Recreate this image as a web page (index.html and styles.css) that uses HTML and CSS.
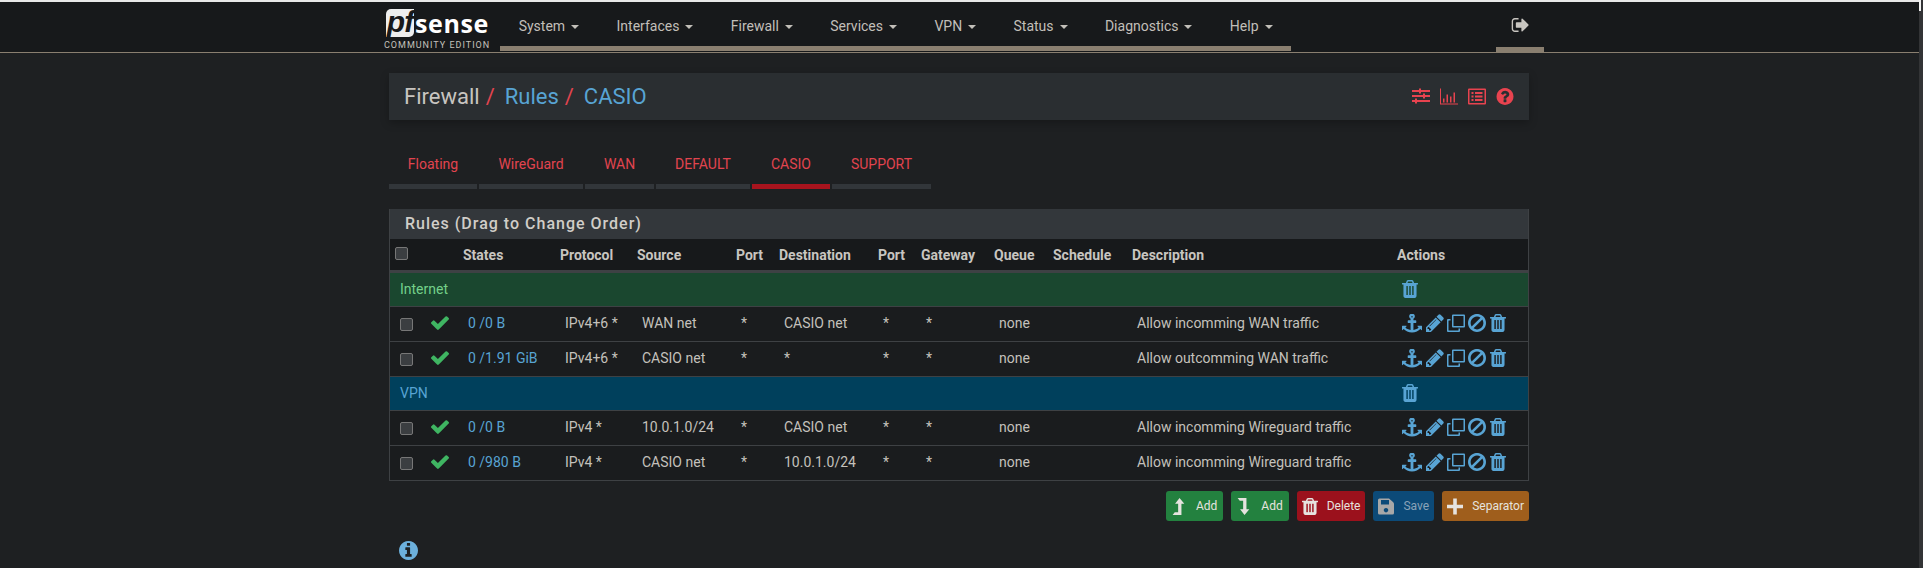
FILE: index.html
```html
<!DOCTYPE html>
<html lang="en">
<head>
<meta charset="utf-8">
<title>Firewall: Rules: CASIO</title>
<link rel="stylesheet" href="styles.css">
</head>
<body>
<svg class="defs">
  <symbol id="i-check" viewBox="121 330 1550 1190"><path d="M1671 566q0 40-28 68l-724 724-136 136q-28 28-68 28t-68-28l-136-136-362-362q-28-28-28-68t28-68l136-136q28-28 68-28t68 28l294 295 656-657q28-28 68-28t68 28l136 136q28 28 28 68z"/></symbol>
  <symbol id="i-trash" viewBox="192 128 1408 1536" preserveAspectRatio="none"><path d="M704 1376v-704q0-14-9-23t-23-9h-64q-14 0-23 9t-9 23v704q0 14 9 23t23 9h64q14 0 23-9t9-23zm256 0v-704q0-14-9-23t-23-9h-64q-14 0-23 9t-9 23v704q0 14 9 23t23 9h64q14 0 23-9t9-23zm256 0v-704q0-14-9-23t-23-9h-64q-14 0-23 9t-9 23v704q0 14 9 23t23 9h64q14 0 23-9t9-23zm-544-992h448l-48-117q-7-9-17-11h-317q-10 2-17 11zm928 32v64q0 14-9 23t-23 9h-96v948q0 83-47 143.5t-113 60.5h-832q-66 0-113-58.5t-47-141.5v-952h-96q-14 0-23-9t-9-23v-64q0-14 9-23t23-9h309l70-167q15-37 54-63t79-26h320q40 0 79 26t54 63l70 167h309q14 0 23 9t9 23z"/></symbol>
  <symbol id="i-anchor" viewBox="0 0 1792 1792" preserveAspectRatio="none"><path d="M960 256q0-26-19-45t-45-19-45 19-19 45 19 45 45 19 45-19 19-45zm832 888v352q0 22-20 30-8 2-12 2-12 0-23-9l-93-93q-119 143-318.5 226.5t-429.5 83.5-429.5-83.5-318.5-226.5l-93 93q-9 9-23 9-4 0-12-2-20-8-20-30v-352q0-14 9-23t23-9h352q22 0 30 20 8 19-7 35l-100 100q67 91 189.5 153.5t271.5 82.5v-647h-192q-26 0-45-19t-19-45v-128q0-26 19-45t45-19h192v-163q-58-34-93-92.5t-35-128.5q0-106 75-181t181-75 181 75 75 181q0 70-35 128.5t-93 92.5v163h192q26 0 45 19t19 45v128q0 26-19 45t-45 19h-192v647q149-20 271.5-82.5t189.5-153.5l-100-100q-15-16-7-35 8-20 30-20h352q14 0 23 9t9 23z"/></symbol>
  <symbol id="i-pencil" viewBox="128 128 1536 1536"><path d="M491 1536l91-91-235-235-91 91v107h128v128h107zm523-928q0-22-22-22-10 0-17 7l-542 542q-7 7-7 17 0 22 22 22 10 0 17-7l542-542q7-7 7-17zm-54-192l416 416-832 832h-416v-416zm683 96q0 53-37 90l-166 166-416-416 166-165q36-38 90-38 53 0 91 38l235 234q37 39 37 91z"/></symbol>
  <symbol id="i-clone" viewBox="0 0 18 18"><path fill-rule="evenodd" d="M5 1.500q0-1 1-1h11q1 0 1 1v11q0 1-1 1H6q-1 0-1-1zm1.500.5v10h10V2zM3.500 5v1.500H2q-.5 0-.5.5v9q0 .5.5.5h9q.5 0 .5-.5v-1.500H13V17q0 1-1 1H1q-1 0-1-1V6q0-1 1-1z"/></symbol>
  <symbol id="i-ban" viewBox="0 128 1536 1536"><path d="M1312 893q0-161-87-295l-754 753q137 89 297 89 111 0 211.5-43.5t173.5-116.5 116-174.5 43-212.5zm-999 299l755-754q-135-91-300-91-148 0-273 73t-198 199-73 274q0 162 89 299zm1223-299q0 157-61 300t-163.5 246-245 164-298.5 61-298.5-61-245-164-163.5-246-61-300 61-299.5 163.5-245.5 245-164 298.5-61 298.5 61 245 164 163.5 245.5 61 299.5z"/></symbol>
  <symbol id="i-signout" viewBox="0 256 1664 1280"><path d="M704 1440q0 4 1 20t.5 26.5-3 23.5-10 19.5-20.5 6.500h-320q-119 0-203.500-84.500t-84.500-203.500v-704q0-119 84.500-203.500t203.500-84.500h320q13 0 22.500 9.500t9.500 22.500q0 4 1 20t.5 26.500-3 23.500-10 19.500-20.500 6.500h-320q-66 0-113 47t-47 113v704q0 66 47 113t113 47h312l11.500 1 11.500 3 8 5.500 7 9 2 13.500zm928-544q0 26-19 45l-544 544q-19 19-45 19t-45-19-19-45v-288h-448q-26 0-45-19t-19-45v-384q0-26 19-45t45-19h448v-288q0-26 19-45t45-19 45 19l544 544q19 19 19 45z"/></symbol>
  <symbol id="i-question" viewBox="0 128 1536 1536"><path d="M896 1376v-192q0-14-9-23t-23-9h-192q-14 0-23 9t-9 23v192q0 14 9 23t23 9h192q14 0 23-9t9-23zm256-672q0-88-55.500-163t-138.500-116-170-41q-243 0-371 213-15 24 8 42l132 100q7 6 19 6 16 0 25-12 53-68 86-92 34-24 86-24 48 0 85.500 26t37.500 59q0 38-20 61t-68 45q-63 28-115.500 86.500t-52.500 125.500v36q0 14 9 23t23 9h192q14 0 23-9t9-23q0-19 21.500-49.500t54.500-49.500q32-18 49-28.500t46-35 44.500-48 28-60.500 12.500-81zm384 192q0 209-103 385.500t-279.500 279.500-385.500 103-385.500-103-279.500-279.500-103-385.500 103-385.500 279.500-279.500 385.500-103 385.500 103 279.500 279.500 103 385.500z"/></symbol>
  <symbol id="i-info" viewBox="0 128 1536 1536"><path d="M1024 1376v-160q0-14-9-23t-23-9h-96v-512q0-14-9-23t-23-9h-320q-14 0-23 9t-9 23v160q0 14 9 23t23 9h96v320h-96q-14 0-23 9t-9 23v160q0 14 9 23t23 9h448q14 0 23-9t9-23zm-128-896v-160q0-14-9-23t-23-9h-192q-14 0-23 9t-9 23v160q0 14 9 23t23 9h192q14 0 23-9t9-23zm640 416q0 209-103 385.500t-279.500 279.500-385.500 103-385.500-103-279.500-279.500-103-385.500 103-385.500 279.500-279.500 385.500-103 385.500 103 279.500 279.500 103 385.500z"/></symbol>
  <symbol id="i-sliders" viewBox="0 0 18 16"><path d="M0 1.500h7V0h2v1.500h9v2H9V5H7V3.500H0zM0 6.500h11V5h2v1.500h5v2h-5V10h-2V8.500H0zM0 11.500h3V10h2v1.500h13v2H5V15H3v-1.500H0z"/></symbol>
  <symbol id="i-chart" viewBox="0 0 18 16"><path d="M0 0h1v15h17v1H0zM3 10h1.500v4H3zM6.500 6H8v8H6.500zM10 8h1.500v6H10zM13.500 4H15v10h-1.500z"/></symbol>
  <symbol id="i-list" viewBox="0 0 18 16"><path fill-rule="evenodd" d="M1 0h16q1 0 1 1v14q0 1-1 1H1q-1 0-1-1V1q0-1 1-1zm.5 1.500v13h15v-13zM3.500 3.500h2v2h-2zM7 3.500h7.500v2H7zM3.500 7h2v2h-2zM7 7h7.500v2H7zM3.500 10.500h2v2h-2zM7 10.500h7.500v2H7z"/></symbol>
  <symbol id="i-levelup" viewBox="0 0 12 16"><path d="M6.500 0l4.500 5.500H8.300V16H0l2-2.500h3.200V5.500H2.300z"/></symbol>
  <symbol id="i-leveldown" viewBox="0 0 12 16"><path d="M6.500 16L11 10.500H8.300V0H0l2 2.500h3.200v8H2.300z"/></symbol>
  <symbol id="i-save" viewBox="0 0 16 16"><path fill-rule="evenodd" d="M1.500 0H11l4 3.500q1 1 1 2V14.500q0 1.500-1.500 1.500h-13Q0 16 0 14.500v-13Q0 0 1.500 0zM3 1.500V6h8V1.500zM8 9.500a2.200 2.200 0 1 0 .01 0z"/></symbol>
  <symbol id="i-plus" viewBox="0 0 16 16"><path d="M6.200 0h3.600v6.200H16v3.600H9.800V16H6.200V9.800H0V6.200h6.200z"/></symbol>
</svg>

<header class="topbar">
  <div class="topbar-inner">
    <a class="brand">
      <span class="brand-mark"><span class="brand-pf">pf</span><span class="brand-sense">sense</span></span>
      <span class="brand-sub">COMMUNITY EDITION</span>
    </a>
    <ul class="menu">
      <li>System<i class="caret"></i></li>
      <li>Interfaces<i class="caret"></i></li>
      <li>Firewall<i class="caret"></i></li>
      <li>Services<i class="caret"></i></li>
      <li>VPN<i class="caret"></i></li>
      <li>Status<i class="caret"></i></li>
      <li>Diagnostics<i class="caret"></i></li>
      <li>Help<i class="caret"></i></li>
    </ul>
    <div class="logout"><svg class="ic-logout"><use href="#i-signout"/></svg></div>
  </div>
</header>

<main class="page">
  <div class="crumbs">
    <h1 class="crumb-title">
      <span class="crumb">Firewall</span><span class="sep">/</span>
      <a class="crumb-link">Rules</a><span class="sep">/</span>
      <a class="crumb-link">CASIO</a>
    </h1>
    <div class="crumb-icons">
      <svg class="ic-head"><use href="#i-sliders"/></svg>
      <svg class="ic-head"><use href="#i-chart"/></svg>
      <svg class="ic-head"><use href="#i-list"/></svg>
      <svg class="ic-head"><use href="#i-question"/></svg>
    </div>
  </div>

  <ul class="tabs">
    <li class="tab t1">Floating</li>
    <li class="tab t2">WireGuard</li>
    <li class="tab t3">WAN</li>
    <li class="tab t4">DEFAULT</li>
    <li class="tab t5 active">CASIO</li>
    <li class="tab t6">SUPPORT</li>
  </ul>

  <section class="panel">
    <h2 class="panel-title">Rules (Drag to Change Order)</h2>
    <table class="rules">
      <colgroup>
        <col class="c1"><col class="c2"><col class="c3"><col class="c4"><col class="c5"><col class="c6"><col class="c7"><col class="c8"><col class="c9"><col class="c10"><col class="c11"><col class="c12"><col class="c13">
      </colgroup>
      <thead>
        <tr>
          <th><input type="checkbox" class="cb"></th><th></th><th>States</th><th>Protocol</th><th>Source</th><th>Port</th><th>Destination</th><th>Port</th><th>Gateway</th><th>Queue</th><th>Schedule</th><th>Description</th><th>Actions</th>
        </tr>
      </thead>
      <tbody>
        <tr class="group green">
          <td colspan="12">Internet</td>
          <td class="acts"><svg class="ic-trash"><use href="#i-trash"/></svg></td>
        </tr>
        <tr>
          <td><input type="checkbox" class="cb"></td>
          <td class="ok"><svg class="ic-check"><use href="#i-check"/></svg></td>
          <td class="link">0 /0 B</td><td>IPv4+6 *</td><td>WAN net</td><td>*</td><td>CASIO net</td><td>*</td><td>*</td><td>none</td><td></td><td>Allow incomming WAN traffic</td>
          <td class="acts"><svg class="ic-anchor"><use href="#i-anchor"/></svg><svg class="ic-pencil"><use href="#i-pencil"/></svg><svg class="ic-clone"><use href="#i-clone"/></svg><svg class="ic-ban"><use href="#i-ban"/></svg><svg class="ic-trash"><use href="#i-trash"/></svg></td>
        </tr>
        <tr>
          <td><input type="checkbox" class="cb"></td>
          <td class="ok"><svg class="ic-check"><use href="#i-check"/></svg></td>
          <td class="link">0 /1.91 GiB</td><td>IPv4+6 *</td><td>CASIO net</td><td>*</td><td>*</td><td>*</td><td>*</td><td>none</td><td></td><td>Allow outcomming WAN traffic</td>
          <td class="acts"><svg class="ic-anchor"><use href="#i-anchor"/></svg><svg class="ic-pencil"><use href="#i-pencil"/></svg><svg class="ic-clone"><use href="#i-clone"/></svg><svg class="ic-ban"><use href="#i-ban"/></svg><svg class="ic-trash"><use href="#i-trash"/></svg></td>
        </tr>
        <tr class="group blue">
          <td colspan="12">VPN</td>
          <td class="acts"><svg class="ic-trash"><use href="#i-trash"/></svg></td>
        </tr>
        <tr>
          <td><input type="checkbox" class="cb"></td>
          <td class="ok"><svg class="ic-check"><use href="#i-check"/></svg></td>
          <td class="link">0 /0 B</td><td>IPv4 *</td><td>10.0.1.0/24</td><td>*</td><td>CASIO net</td><td>*</td><td>*</td><td>none</td><td></td><td>Allow incomming Wireguard traffic</td>
          <td class="acts"><svg class="ic-anchor"><use href="#i-anchor"/></svg><svg class="ic-pencil"><use href="#i-pencil"/></svg><svg class="ic-clone"><use href="#i-clone"/></svg><svg class="ic-ban"><use href="#i-ban"/></svg><svg class="ic-trash"><use href="#i-trash"/></svg></td>
        </tr>
        <tr>
          <td><input type="checkbox" class="cb"></td>
          <td class="ok"><svg class="ic-check"><use href="#i-check"/></svg></td>
          <td class="link">0 /980 B</td><td>IPv4 *</td><td>CASIO net</td><td>*</td><td>10.0.1.0/24</td><td>*</td><td>*</td><td>none</td><td></td><td>Allow incomming Wireguard traffic</td>
          <td class="acts"><svg class="ic-anchor"><use href="#i-anchor"/></svg><svg class="ic-pencil"><use href="#i-pencil"/></svg><svg class="ic-clone"><use href="#i-clone"/></svg><svg class="ic-ban"><use href="#i-ban"/></svg><svg class="ic-trash"><use href="#i-trash"/></svg></td>
        </tr>
      </tbody>
    </table>
  </section>

  <div class="buttons">
    <a class="btn b-green"><svg class="ic-btn"><use href="#i-levelup"/></svg>Add</a>
    <a class="btn b-green"><svg class="ic-btn"><use href="#i-leveldown"/></svg>Add</a>
    <a class="btn b-red"><svg class="ic-btn"><use href="#i-trash"/></svg>Delete</a>
    <a class="btn b-blue"><svg class="ic-btn ic-save"><use href="#i-save"/></svg>Save</a>
    <a class="btn b-orange"><svg class="ic-btn"><use href="#i-plus"/></svg>Separator</a>
  </div>

  <div class="info"><svg class="ic-info"><use href="#i-info"/></svg></div>
</main>
<div class="scrollbar"><div class="scroll-thumb"></div></div>
</body>
</html>
```

FILE: styles.css
```css
* { box-sizing: border-box; }
html, body { margin: 0; padding: 0; }
body {
  background: #1e2022;
  color: #c8c5c0;
  font-family: Roboto, "Liberation Sans", sans-serif;
  font-size: 14px;
  height: 568px;
  overflow: hidden;
}
svg { fill: currentColor; display: block; }
.defs { display: none; }
ul { list-style: none; margin: 0; padding: 0; }

.scrollbar { position: absolute; top: 0; right: 0; width: 4px; height: 568px; background: #333436; }
.scroll-thumb { width: 2px; height: 11px; background: #f2f2f2; }

.topbar {
  background: #17191b;
  border-top: 2px solid #e8e8e8;
  border-bottom: 1px solid #8a7f70;
  height: 53px;
  padding-right: 5px;
  display: flex;
  justify-content: center;
}
.topbar-inner { width: 1140px; display: flex; }
.brand { width: 111px; display: flex; flex-direction: column; color: #fff; }
.brand-mark { display: flex; align-items: center; height: 28px; margin-top: 7px; margin-left: -3px; }
.brand-pf {
  background: #eeeeee;
  color: #17191b;
  width: 28px;
  height: 28px;
  border-radius: 5px 0 5px 0;
  font: italic bold 30px/25px "Liberation Sans", sans-serif;
  letter-spacing: -1px;
  text-align: center;
}
.brand-sense { font: bold 25px/28px "Open Sans", sans-serif; letter-spacing: 0.6px; margin-left: 1px; }
.brand-sub { font-size: 9px; line-height: 11px; letter-spacing: 1px; color: #c4c1bc; margin-top: 3px; margin-left: -5px; white-space: nowrap; }

.menu {
  display: flex;
  height: 49px;
  border-bottom: 5px solid #8a7f70;
  color: #c2bfb9;
}
.menu li { padding: 0 18.700px; line-height: 48px; white-space: nowrap; }
.caret {
  display: inline-block;
  width: 0; height: 0;
  margin-left: 6px;
  vertical-align: 2px;
  border-top: 4px solid;
  border-left: 4px solid transparent;
  border-right: 4px solid transparent;
}
.logout {
  margin-left: auto;
  margin-right: -15px;
  width: 48px;
  height: 50px;
  border-bottom: 5px solid #8a7f70;
  color: #c9c6c1;
  display: flex;
  justify-content: center;
  padding-top: 16px;
}
.ic-logout { width: 18px; height: 14px; }

.page { width: 1140px; margin: 0 auto; position: relative; left: -2.500px; }

.crumbs {
  margin-top: 20px;
  height: 47px;
  background: #2a2e31;
  box-shadow: 0 3px 8px rgba(0,0,0,.25);
  display: flex;
  align-items: center;
  justify-content: space-between;
  padding: 0 15px;
}
.crumb-title { margin: 0; font-size: 22px; font-weight: 400; display: flex; }
.crumb { color: #c8c5c0; }
.sep { color: #e2444f; margin: 0 10px 0 6px; }
.crumb-link { color: #58a4d4; }
.crumb-icons { display: flex; gap: 10px; color: #e8434f; }
.ic-head { width: 18px; height: 17px; }

.tabs { display: flex; gap: 2px; margin-top: 24px; height: 45px; }
.tab {
  color: #e2444f;
  text-align: center;
  line-height: 40px;
  border-bottom: 5px solid #32363a;
  height: 45px;
}
.t1 { width: 88px; }
.t2 { width: 104px; }
.t3 { width: 69px; }
.t4 { width: 94px; }
.t5 { width: 78px; }
.t6 { width: 99px; }
.tab.active { border-bottom-color: #a8141e; }

.panel { margin-top: 20px; border: 1px solid #3e4144; border-top: 0; }
.panel-title {
  margin: 0;
  height: 30px;
  background: #33373b;
  padding-left: 15px;
  font-size: 16px;
  font-weight: 500;
  line-height: 29px;
  letter-spacing: 1px;
  color: #d0cdc8;
}
.rules { width: 1138px; table-layout: fixed; border-collapse: separate; border-spacing: 0; background: #1a1c1e; }
.c1 { width: 31px; } .c2 { width: 37px; } .c3 { width: 97px; } .c4 { width: 77px; }
.c5 { width: 99px; } .c6 { width: 43px; } .c7 { width: 99px; } .c8 { width: 43px; }
.c9 { width: 73px; } .c10 { width: 59px; } .c11 { width: 79px; } .c12 { width: 265px; } .c13 { width: 136px; }
.rules th {
  height: 34px;
  padding: 0 0 0 5px;
  text-align: left;
  font-weight: 700;
  font-size: 14px;
  background: #17191b;
  color: #c8c5c0;
  border-bottom: 3px solid #3e4144;
  white-space: nowrap;
}
.rules td {
  height: 35px;
  padding: 0 0 2px 10px;
  border-bottom: 1px solid #3e4144;
  color: #c4c1bc;
  white-space: nowrap;
}
.rules tbody tr:last-child td { border-bottom: 0; height: 34px; }
.cb {
  appearance: none;
  display: block;
  width: 13px;
  height: 13px;
  margin: 0;
  background: #3b3e41;
  border: 1px solid #777;
  border-radius: 2px;
}
.rules th .cb { margin-bottom: 3px; }
.rules td .cb { margin-top: 2px; }
.rules .group td { height: 34px; }
.rules .green td { background: #1a472f; color: #74d08a; }
.rules .blue td { background: #00405c; color: #58a4d4; }
.rules td.link { color: #58a4d4; }
.rules td.ok { color: #3fb562; }
.rules td.acts { color: #58a4d4; padding-left: 10px; }
.acts svg { display: inline-block; vertical-align: middle; }
.ic-check { width: 18px; height: 14px; }
.ic-anchor { width: 20px; height: 19px; }
.ic-pencil { width: 18px; height: 18px; margin-left: 4px; }
.ic-clone { width: 18px; height: 18px; margin-left: 3px; }
.ic-ban { width: 18px; height: 18px; margin-left: 3px; }
.ic-trash { width: 16px; height: 18px; margin-left: 4px; }
.group .ic-trash { margin-left: 0; }

.buttons { display: flex; justify-content: flex-end; gap: 8px; margin-top: 10px; }
.btn {
  display: flex;
  align-items: center;
  height: 30px;
  padding: 0 5px;
  gap: 9px;
  border-radius: 3px;
  font-size: 12px;
  color: #e6e3df;
}
.b-green { background: #23813f; padding-right: 6px; }
.b-red { background: #9b111c; }
.b-blue { background: #0c4a78; color: #8aa3b8; }
.b-orange { background: #9f5e1c; }
.ic-btn { width: 16px; height: 17px; }
.ic-save { color: #a8a8a8; }

.info { margin-top: 20px; padding-left: 10px; }
.ic-info { width: 19px; height: 19px; color: #6cb0dc; }
```
